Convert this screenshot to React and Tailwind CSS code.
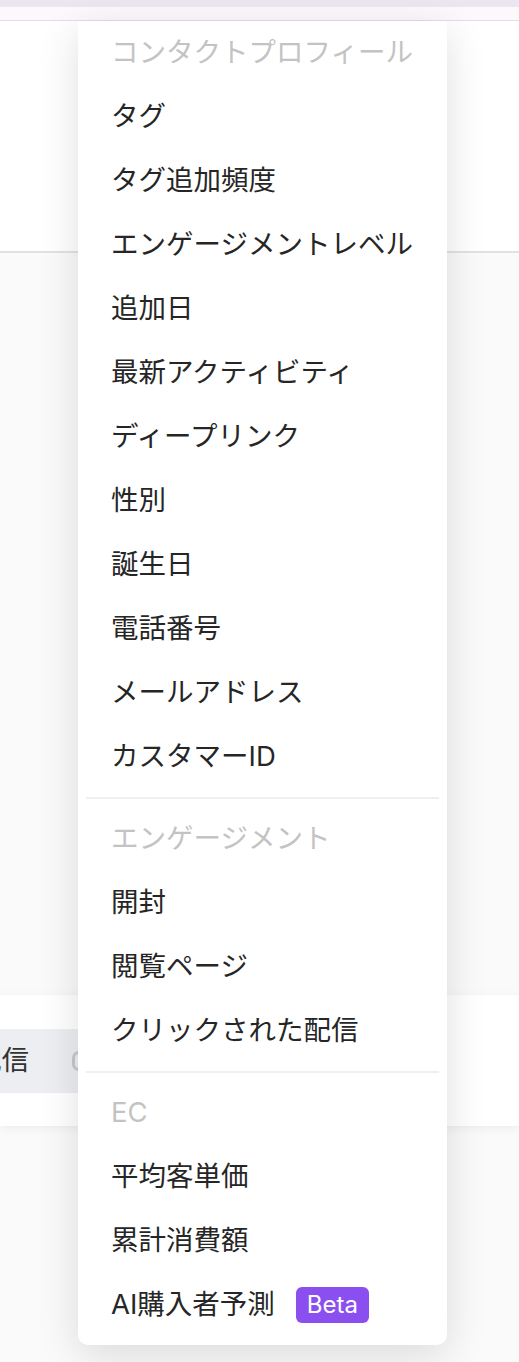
import React from 'react';

const sections = [
  {
    title: 'コンタクトプロフィール',
    items: ['タグ', 'タグ追加頻度', 'エンゲージメントレベル', '追加日', '最新アクティビティ', 'ディープリンク', '性別', '誕生日', '電話番号', 'メールアドレス', 'カスタマーID'],
  },
  {
    title: 'エンゲージメント',
    items: ['開封', '閲覧ページ', 'クリックされた配信'],
  },
  {
    title: 'EC',
    items: ['平均客単価', '累計消費額', 'AI購入者予測'],
  },
];

const MenuRow = ({ children, muted }) => (
  <div
    className={`h-16 flex items-center pl-[33px] text-[27.5px] leading-none whitespace-nowrap ${
      muted ? 'text-[#c3c3c3]' : 'text-[#262626]'
    }`}
  >
    {children}
  </div>
);

const FieldMenu = () => {
  return (
    <div className="absolute left-[78px] top-[21px] w-[369px] bg-white rounded-b-[10px] pb-2 shadow-[0_10px_40px_rgba(0,0,0,0.13)] z-10">
      {sections.map((section, i) => (
        <div key={section.title}>
          {i > 0 && <div className="mx-2 my-2 h-[2px] bg-[#efefef]" />}
          <MenuRow muted>{section.title}</MenuRow>
          {section.items.map((item) => (
            <MenuRow key={item}>
              {item}
              {item === 'AI購入者予測' && (
                <span className="ml-[21px] h-9 px-[11px] flex items-center rounded-[6px] bg-[#8b4ff0] text-white text-[24px] leading-none">
                  Beta
                </span>
              )}
            </MenuRow>
          ))}
        </div>
      ))}
    </div>
  );
};

export default function App() {
  return (
    <div
      className="relative w-[519px] h-[1362px] overflow-hidden bg-[#fafafa]"
      style={{ fontFamily: 'Inter, "Noto Sans CJK JP", sans-serif' }}
    >
      {/* top bar */}
      <div className="h-[7px] bg-[#ece6f1]" />
      <div className="h-[14px] bg-[#fcf8fc] border-b border-[#e5dbea]" />

      {/* upper panel */}
      <div className="h-[232px] bg-white border-b-2 border-[#e2e1e7]" />

      {/* grey area */}
      <div className="h-[742px]" />

      {/* card behind the menu, scrolled off to the left */}
      <div className="h-[131px] bg-white shadow-[0_2px_10px_rgba(0,0,0,0.06)] flex items-center">
        <div className="-ml-[26px] h-16 w-[124px] shrink-0 bg-[#eceef2] flex items-center text-[27.5px] leading-none text-[#333]">
          配信
          <span className="ml-auto mr-[12px] w-[14px] h-[20px] rounded-full border-[3px] border-[#c8c8cc]" />
        </div>
      </div>

      <FieldMenu />
    </div>
  );
}
